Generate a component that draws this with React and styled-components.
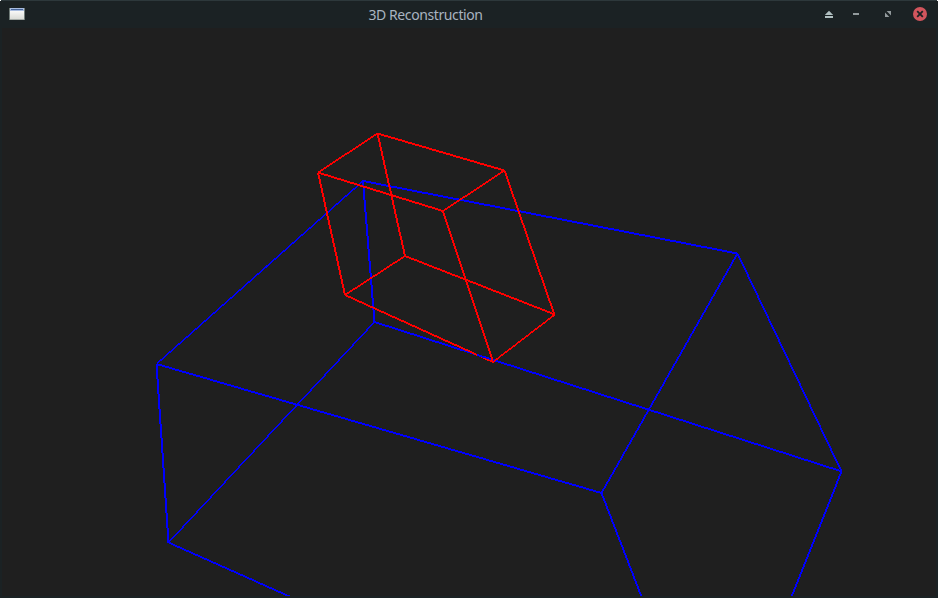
import React from "react";
import styled, { createGlobalStyle } from "styled-components";

const GlobalStyle = createGlobalStyle`
  body { margin: 0; background: #1b2224; }
  * { box-sizing: border-box; }
`;

const Window = styled.main`
  display: flex;
  flex-direction: column;
  width: 938px;
  height: 598px;
  overflow: hidden;
  background: #1b2224;
`;

const TopEdge = styled.div`
  flex: 0 0 1px;
  border: solid #ffffff;
  border-width: 0 1px;
  background: #2d383b;
`;

const TitleBar = styled.header`
  display: grid;
  grid-template-columns: 110px 1fr 110px;
  align-items: center;
  flex: 0 0 27px;
  padding: 0 10px 0 9px;
  background: #1b2224;
`;

const WindowIcon = styled.svg`
  display: block;
  width: 16px;
  height: 13px;
`;

const Title = styled.h1`
  margin: 0;
  padding-right: 86px;
  color: #a9b4c0;
  font: 400 14px/20px "Noto Sans", sans-serif;
  letter-spacing: -0.4px;
  text-align: center;
  white-space: nowrap;
`;

const Controls = styled.div`
  display: flex;
  align-items: center;
  justify-content: flex-end;
  gap: 15px;
`;

const ControlButton = styled.button`
  display: block;
  width: 15px;
  height: 15px;
  padding: 0;
  border: 0;
  background: none;
  svg { display: block; }
`;

const Viewport = styled.section`
  flex: 1;
  margin: 0 2px 2px 2px;
  overflow: hidden;
  background: #1f1f1f;
`;

const Scene = styled.svg`
  display: block;
  width: 934px;
  height: 568px;
`;

const RED = {
  color: "#ff0000",
  edges: [
    [377.5, 133.5, 504.5, 170.5], [504.5, 170.5, 443, 211], [443, 211, 318, 172.5], [318, 172.5, 377.5, 133.5],
    [405, 256, 555, 314.5], [555, 314.5, 493, 362], [493, 362, 345, 295], [345, 295, 405, 256],
    [377.5, 133.5, 405, 256], [504.5, 170.5, 554.5, 315], [443, 211, 493, 362], [318, 172.5, 345, 295],
  ],
};

const BLUE = {
  color: "#0000ff",
  edges: [
    [363, 181, 737.5, 253.5], [737.5, 253.5, 601.5, 493], [601.5, 493, 156.5, 364], [156.5, 364, 363, 181],
    [374.5, 322, 842, 471.5], [168.5, 542.5, 374.5, 322], [363, 181, 374.5, 322], [737.5, 253.5, 841.5, 471.5],
    [156.5, 364, 168.5, 542.5], [601.5, 493, 642, 598], [841.5, 471.5, 791, 598], [168.5, 542.5, 293, 598],
  ],
};

// Stretch of the rear blue edge that passes in front of the red box.
const BLUE_FRONT = {
  color: "#0000ff",
  edges: [[477, 354.8, 490, 358.9]],
};

// Lines are two pixels thick along their minor axis.
function edgePoints([x1, y1, x2, y2]) {
  const steep = Math.abs(y2 - y1) > Math.abs(x2 - x1);
  const dx = steep ? 1 : 0;
  const dy = steep ? 0 : 1;
  return [
    [x1 - dx, y1 - dy], [x2 - dx, y2 - dy], [x2 + dx, y2 + dy], [x1 + dx, y1 + dy],
  ].map((p) => p.join(",")).join(" ");
}

function Wireframe({ color, edges }) {
  return (
    <g fill={color}>
      {edges.map((edge) => <polygon key={edge.join()} points={edgePoints(edge)} />)}
    </g>
  );
}

export default function App() {
  return (
    <Window>
      <GlobalStyle />
      <TopEdge />
      <TitleBar>
        <WindowIcon viewBox="0 0 16 13">
          <defs>
            <linearGradient id="paper" x1="0" y1="0" x2="0" y2="1">
              <stop offset="0" stopColor="#ffffff" />
              <stop offset="1" stopColor="#d9dad5" />
            </linearGradient>
          </defs>
          <rect width="16" height="12" fill="#707b78" />
          <rect x="1" y="1" width="14" height="10.5" fill="url(#paper)" />
          <rect x="1" y="0" width="14" height="3" fill="#a9bde0" />
          <rect x="2" y="1" width="12" height="1" fill="#46659b" />
        </WindowIcon>
        <Title>3D Reconstruction</Title>
        <Controls>
          <ControlButton aria-label="Keep above">
            <svg width="15" height="15" viewBox="0 0 15 15" fill="#b0bfc0">
              <path d="M6 3.7 10.2 8H1.8z" />
              <rect x="2" y="9" width="8" height="2" />
            </svg>
          </ControlButton>
          <ControlButton aria-label="Minimize">
            <svg width="15" height="15" viewBox="0 0 15 15">
              <rect x="0" y="6" width="6" height="2" fill="#929a9c" />
            </svg>
          </ControlButton>
          <ControlButton aria-label="Maximize">
            <svg width="15" height="15" viewBox="0 0 15 15" fill="#929a9c">
              <path d="M3.6 4H8v4.4zM2 5.6V10h4.4z" />
            </svg>
          </ControlButton>
          <ControlButton aria-label="Close">
            <svg width="15" height="15" viewBox="0 0 15 15">
              <circle cx="7" cy="7" r="7" fill="#d2555d" />
              <path d="m4.2 4.2 5.6 5.6m0-5.6-5.6 5.6" stroke="#1b2224" strokeWidth="1.8" />
            </svg>
          </ControlButton>
        </Controls>
      </TitleBar>
      <Viewport>
        <Scene viewBox="2 28 934 568" shapeRendering="crispEdges">
          <Wireframe {...BLUE} />
          <Wireframe {...RED} />
          <Wireframe {...BLUE_FRONT} />
        </Scene>
      </Viewport>
    </Window>
  );
}
